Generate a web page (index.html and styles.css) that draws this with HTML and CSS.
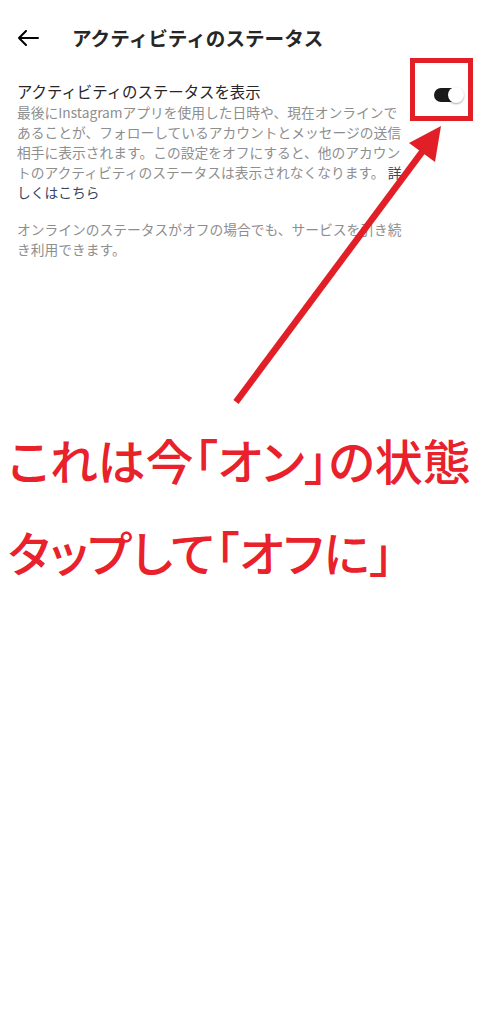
FILE: index.html
```html
<!DOCTYPE html>
<html lang="ja">
<head>
<meta charset="utf-8">
<title>アクティビティのステータス</title>
<link rel="stylesheet" href="styles.css">
</head>
<body>
<div class="page">
  <header class="topbar">
    <svg class="back" width="22" height="16" viewBox="0 0 22 16" aria-hidden="true">
      <path d="M21 8H2M9 1L2 8l7 7" fill="none" stroke="#000" stroke-width="2" stroke-linecap="round" stroke-linejoin="round"/>
    </svg>
    <h1 class="title">アクティビティのステータス</h1>
  </header>

  <section class="setting">
    <div class="setting-text">
      <div class="label">アクティビティのステータスを表示</div>
      <p class="desc">最後にInstagramアプリを使用した日時や、現在オンラインで<br>あることが、フォローしているアカウントとメッセージの送信<br>相手に表示されます。この設定をオフにすると、他のアカウン<br>トのアクティビティのステータスは表示されなくなります。 <span class="link">詳<br>しくはこちら</span></p>
    </div>
    <div class="toggle"><span class="knob"></span></div>
  </section>

  <p class="note">オンラインのステータスがオフの場合でも、サービスを引き続<br>き利用できます。</p>

  <div class="callout">
    <div class="callout-line">これは今「オン」の状態</div>
    <div class="callout-line">タップして「オフに」</div>
  </div>

  <div class="highlight"></div>
  <svg class="arrow" width="484" height="420" viewBox="0 0 484 420" aria-hidden="true">
    <line x1="236" y1="402" x2="425" y2="148" stroke="#e21f26" stroke-width="6.5"/>
    <polygon points="441,126 409,143 435,162" fill="#e21f26"/>
  </svg>
</div>
</body>
</html>
```
FILE: styles.css
```css
html, body {
  margin: 0;
  padding: 0;
  background: #fff;
}
body {
  font-family: "Noto Sans CJK JP", "Noto Sans", Roboto, sans-serif;
  color: #262626;
}
.page {
  position: relative;
  width: 484px;
  min-height: 1024px;
}
.topbar {
  display: flex;
  align-items: center;
  height: 76px;
  padding-left: 17px;
  box-sizing: border-box;
}
.back {
  flex: none;
}
.title {
  margin: 0 0 0 33px;
  font-size: 19.6px;
  font-weight: 700;
  line-height: 1;
  color: #262626;
}
.setting {
  display: flex;
  justify-content: space-between;
  align-items: flex-start;
  padding: 4px 20px 0 17px;
}
.setting-text {
  flex: 1;
}
.label {
  font-size: 15.4px;
  line-height: 22px;
  color: #262626;
}
.desc {
  margin: 0;
  font-size: 13.75px;
  line-height: 20px;
  color: #8e8e8e;
  white-space: nowrap;
}
.link {
  color: #38465c;
}
.toggle {
  position: relative;
  flex: none;
  width: 28px;
  height: 14px;
  margin-top: 8px;
  margin-right: 2px;
  border-radius: 7px;
  background: #1a1a1a;
}
.knob {
  position: absolute;
  right: -2px;
  top: -1px;
  width: 16px;
  height: 16px;
  border-radius: 50%;
  background: #fff;
  box-shadow: 0 1px 2px rgba(0,0,0,0.35);
}
.note {
  margin: 17px 0 0 17px;
  font-size: 13.75px;
  line-height: 20px;
  color: #8e8e8e;
  white-space: nowrap;
}
.callout {
  margin-top: 154px;
  padding-left: 8px;
}
.callout-line {
  font-size: 48px;
  font-weight: 500;
  font-feature-settings: "palt";
  line-height: 92px;
  color: #e8212a;
  white-space: nowrap;
}
.highlight {
  position: absolute;
  left: 410px;
  top: 58px;
  width: 63px;
  height: 63px;
  box-sizing: border-box;
  border: 5px solid #e21f26;
}
.arrow {
  position: absolute;
  left: 0;
  top: 0;
}
```
